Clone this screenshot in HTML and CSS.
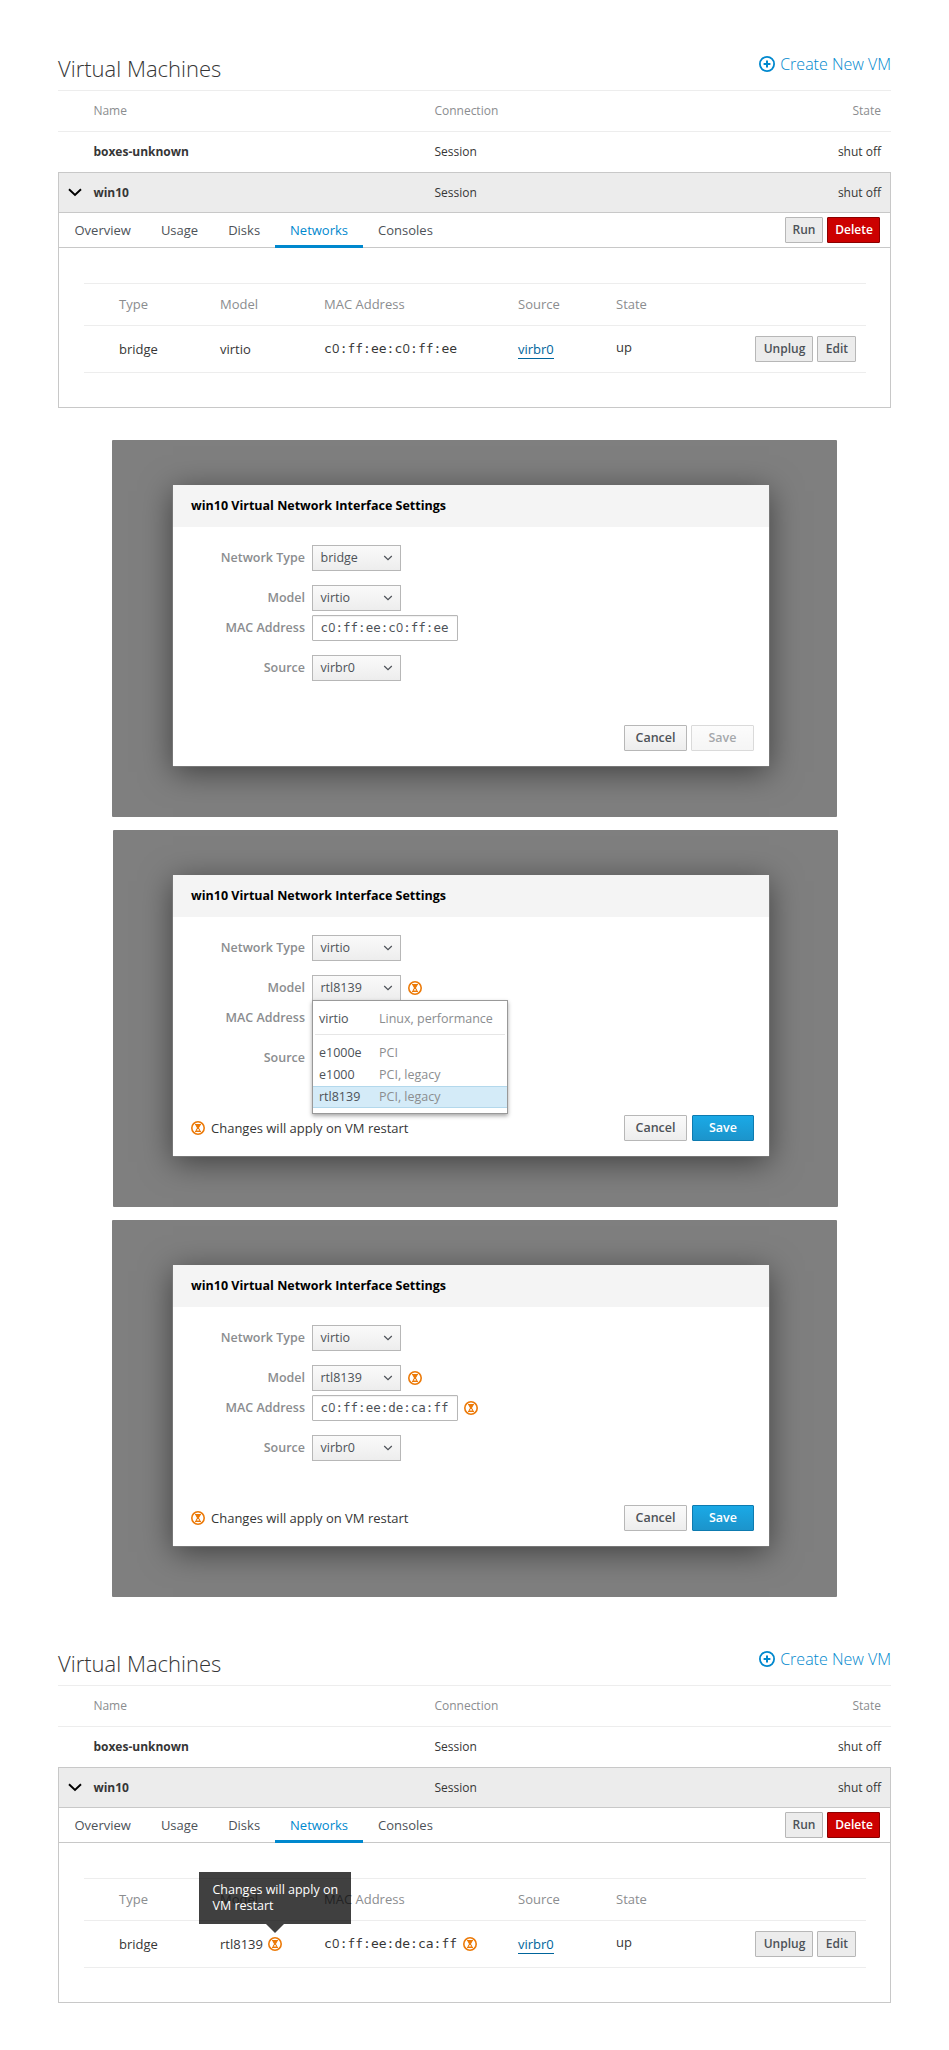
FILE: index.html
```html
<!DOCTYPE html>
<html lang="en">
<head>
<meta charset="utf-8">
<title>Virtual Machines</title>
<link rel="stylesheet" href="styles.css">
</head>
<body>
<svg class="defs" aria-hidden="true">
  <symbol id="pending" viewBox="0 0 14 14">
    <circle cx="7" cy="7" r="6.2" fill="#fff" stroke="#ec7a08" stroke-width="1.6"/>
    <path d="M4 3.1h6v1.2H9.2C9.2 5.6 8.4 6.3 7.8 7c.6.7 1.4 1.4 1.4 2.7H10v1.2H4V9.700h.8C4.800 8.400 5.600 7.700 6.200 7 5.600 6.300 4.800 5.600 4.800 4.300H4z" fill="#ec7a08"/>
    <path d="M5.700 9.500c.1-.8.600-1.100 1.300-1.500.7.400 1.200.7 1.300 1.500z" fill="#fff"/>
  </symbol>
  <symbol id="chev" viewBox="0 0 10 6"><path d="M1.200 1 5 4.700 8.800 1" fill="none" stroke="#4d5258" stroke-width="1.200"/></symbol>
</svg>
<main class="page">
  <section class="vms">
    <header class="vms-head">
      <h1>Virtual Machines</h1>
      <a class="create"><svg width="16" height="16" viewBox="0 0 16 16"><circle cx="8" cy="8" r="7.100" fill="none" stroke="#0088ce" stroke-width="1.800"/><path d="M8 4.600v6.800M4.600 8h6.800" stroke="#0088ce" stroke-width="2"/></svg>Create New VM</a>
    </header>
    <div class="vm-row labels"><span></span><span>Name</span><span>Connection</span><span class="end">State</span></div>
    <div class="vm-row"><span></span><b>boxes-unknown</b><span>Session</span><span class="end">shut off</span></div>
    <div class="panel">
      <div class="vm-row open"><svg class="toggle" width="14" height="9" viewBox="0 0 14 9"><path d="M1 1.200 7 7l6-5.800" fill="none" stroke="#000" stroke-width="1.900"/></svg><b>win10</b><span>Session</span><span class="end">shut off</span></div>
      <nav class="tabs"><a>Overview</a><a>Usage</a><a>Disks</a><a class="active">Networks</a><a>Consoles</a><span class="actions"><button class="btn run">Run</button><button class="btn danger">Delete</button></span></nav>
      <div class="nets">
        <div class="net labels"><span>Type</span><span>Model</span><span>MAC Address</span><span>Source</span><span>State</span></div>
        <div class="net"><span>bridge</span><span>virtio</span><span class="mac">c<i>0</i>:ff:ee:c<i>0</i>:ff:ee</span><span><a class="link">virbr0</a></span><span class="state">up</span><span class="acts"><button class="btn unplug">Unplug</button><button class="btn edit">Edit</button></span></div>
      </div>
    </div>
  </section>

  <section class="backdrop">
    <div class="dialog">
      <h2>win10 Virtual Network Interface Settings</h2>
      <div class="form">
        <div class="field"><label>Network Type</label><span class="select">bridge<svg width="10" height="6"><use href="#chev"/></svg></span></div>
        <div class="field tight"><label>Model</label><span class="select">virtio<svg width="10" height="6"><use href="#chev"/></svg></span></div>
        <div class="field"><label>MAC Address</label><span class="input"><span class="mac">c<i>0</i>:ff:ee:c<i>0</i>:ff:ee</span></span></div>
        <div class="field"><label>Source</label><span class="select">virbr0<svg width="10" height="6"><use href="#chev"/></svg></span></div>
      </div>
      <footer><button class="btn soft">Cancel</button><button class="btn soft disabled">Save</button></footer>
    </div>
  </section>

  <section class="backdrop shifted">
    <div class="dialog">
      <h2>win10 Virtual Network Interface Settings</h2>
      <div class="form">
        <div class="field"><label>Network Type</label><span class="select">virtio<svg width="10" height="6"><use href="#chev"/></svg></span></div>
        <div class="field tight"><label>Model</label><span class="select">rtl8139<svg width="10" height="6"><use href="#chev"/></svg>
          <span class="menu">
            <span class="opt first"><span>virtio</span><em>Linux, performance</em></span>
            <span class="opt"><span>e1000e</span><em>PCI</em></span>
            <span class="opt"><span>e1000</span><em>PCI, legacy</em></span>
            <span class="opt picked"><span>rtl8139</span><em>PCI, legacy</em></span>
          </span></span><svg class="pend" width="14" height="14"><use href="#pending"/></svg></div>
        <div class="field"><label>MAC Address</label></div>
        <div class="field"><label>Source</label></div>
      </div>
      <footer><span class="note"><svg width="14" height="14"><use href="#pending"/></svg>Changes will apply on VM restart</span><button class="btn soft">Cancel</button><button class="btn primary">Save</button></footer>
    </div>
  </section>

  <section class="backdrop">
    <div class="dialog">
      <h2>win10 Virtual Network Interface Settings</h2>
      <div class="form">
        <div class="field"><label>Network Type</label><span class="select">virtio<svg width="10" height="6"><use href="#chev"/></svg></span></div>
        <div class="field tight"><label>Model</label><span class="select">rtl8139<svg width="10" height="6"><use href="#chev"/></svg></span><svg class="pend" width="14" height="14"><use href="#pending"/></svg></div>
        <div class="field"><label>MAC Address</label><span class="input"><span class="mac">c<i>0</i>:ff:ee:de:ca:ff</span></span><svg class="pend near" width="14" height="14"><use href="#pending"/></svg></div>
        <div class="field"><label>Source</label><span class="select">virbr0<svg width="10" height="6"><use href="#chev"/></svg></span></div>
      </div>
      <footer><span class="note"><svg width="14" height="14"><use href="#pending"/></svg>Changes will apply on VM restart</span><button class="btn soft">Cancel</button><button class="btn primary">Save</button></footer>
    </div>
  </section>

  <section class="vms last">
    <header class="vms-head">
      <h1>Virtual Machines</h1>
      <a class="create"><svg width="16" height="16" viewBox="0 0 16 16"><circle cx="8" cy="8" r="7.100" fill="none" stroke="#0088ce" stroke-width="1.800"/><path d="M8 4.600v6.800M4.600 8h6.800" stroke="#0088ce" stroke-width="2"/></svg>Create New VM</a>
    </header>
    <div class="vm-row labels"><span></span><span>Name</span><span>Connection</span><span class="end">State</span></div>
    <div class="vm-row"><span></span><b>boxes-unknown</b><span>Session</span><span class="end">shut off</span></div>
    <div class="panel">
      <div class="vm-row open"><svg class="toggle" width="14" height="9" viewBox="0 0 14 9"><path d="M1 1.200 7 7l6-5.800" fill="none" stroke="#000" stroke-width="1.900"/></svg><b>win10</b><span>Session</span><span class="end">shut off</span></div>
      <nav class="tabs"><a>Overview</a><a>Usage</a><a>Disks</a><a class="active">Networks</a><a>Consoles</a><span class="actions"><button class="btn run">Run</button><button class="btn danger">Delete</button></span></nav>
      <div class="nets">
        <div class="net labels"><span>Type</span><span>Model</span><span>MAC Address</span><span>Source</span><span>State</span></div>
        <div class="net"><span>bridge</span><span class="flagged">rtl8139<span class="tip-anchor"><svg width="14" height="14"><use href="#pending"/></svg><span class="tip">Changes will apply on<br>VM restart</span></span></span><span class="flagged"><span class="mac">c<i>0</i>:ff:ee:de:ca:ff</span><svg width="14" height="14"><use href="#pending"/></svg></span><span><a class="link">virbr0</a></span><span class="state">up</span><span class="acts"><button class="btn unplug">Unplug</button><button class="btn edit">Edit</button></span></div>
      </div>
    </div>
  </section>
</main>
</body>
</html>
```
FILE: styles.css
```css
* { box-sizing: border-box; }
body { margin: 0; background: #fff; color: #363636; font: 13px/18px "Open Sans", "Noto Sans", sans-serif; }
.defs { position: absolute; width: 0; height: 0; }
svg { display: block; flex: none; }
.page { height: 2050px; padding-top: 40px; white-space: nowrap; }

/* machine list */
.vms { width: 833px; margin-left: 58px; margin-bottom: 32px; }
.vms.last { margin-top: 38px; margin-bottom: 0; }
.vms-head { height: 50px; display: flex; justify-content: space-between; align-items: flex-start; }
h1 { margin: 11px 0 0; font-size: 22px; line-height: 34px; font-weight: 300; }
.create { display: flex; align-items: center; gap: 5px; margin-top: 12px; font-size: 16px; line-height: 24px; font-weight: 300; color: #0088ce; }
.vm-row { height: 41px; border-top: 1px solid #ededed; padding-right: 10px; display: grid; grid-template-columns: 35.4px 341px 1fr auto; align-items: center; font-size: 12px; }
.labels { color: #8b8d8f; }
.panel { border: 1px solid #c8c8c8; height: 236px; }
.vm-row.open { height: 40px; background: #ececec; border-top: 0; border-bottom: 1px solid #c8c8c8; padding-right: 9px; grid-template-columns: 34.4px 341px 1fr auto; }
.toggle { margin-left: 9px; }
.tabs { height: 35px; display: flex; border-bottom: 1px solid #c8c8c8; padding: 0 10px 0 .5px; color: #4d5258; }
.tabs a { height: 35px; line-height: 35px; padding: 0 15px; }
.tabs a.active { color: #0088ce; border-bottom: 3px solid #0088ce; }
.actions { margin-left: auto; display: flex; gap: 4px; padding-top: 4px; }

.btn { height: 26px; padding: 0; border: 1px solid #b7b7b7; border-radius: 1px; background: #ececec; color: #4d5258; font: 600 12px/22px "Open Sans", "Noto Sans", sans-serif; }
.run { width: 38px; }
.danger { width: 53px; padding-left: 1px; background: #c00; border-color: #8b0000; color: #fff; }
.unplug { width: 58px; padding-left: 1px; }
.edit { width: 39px; padding-left: 1px; }
.soft, .primary { width: 63px; font-size: 12.5px; background: linear-gradient(#fafafa, #ededed); }
.disabled { opacity: .5; }
.primary { width: 62px; margin-left: 1px; background: linear-gradient(#1aa9e6, #1c94cb); border-color: #0d7bb0; color: #fff; }

.nets { margin: 35px 24px 0 25px; border-bottom: 1px solid #ededed; }
.net { height: 47px; border-top: 1px solid #ededed; padding: 0 10px 0 35px; display: grid; grid-template-columns: 101px 104px 194px 98px 1fr auto; align-items: center; }
.net.labels { height: 42px; grid-template-columns: 101px 104px 194px 98px 1fr; padding-bottom: 1px; }
.state { position: relative; top: -2px; }
.acts { display: flex; gap: 4px; }
.link { color: #00659c; border-bottom: 1px solid #00659c; }
.mac { font-family: "DejaVu Sans Mono", monospace; }
.mac i { display: inline-block; width: .602em; text-align: center; font-family: "Open Sans", sans-serif; font-style: normal; line-height: 1; }
.flagged { display: flex; align-items: center; gap: 6px; }
.tip-anchor { position: relative; left: -.5px; }
.tip { position: absolute; left: -69px; top: -65px; width: 152px; height: 52px; padding: 10px 13px; background: rgba(0, 0, 0, .75); color: #fff; line-height: 16px; font-size: 12.5px; }
.tip::after { content: ""; position: absolute; left: 67px; top: 52px; border: 9px solid transparent; border-top-color: rgba(0, 0, 0, .75); border-bottom: 0; }

/* settings dialogs */
.backdrop { width: 725px; height: 377px; margin: 0 0 13px 112px; padding: 45px 0 0 61px; background: #7f7f7f; border-radius: 1px; overflow: hidden; }
.shifted { margin-left: 113px; padding-left: 60px; }
.dialog { width: 596px; height: 281px; background: #fff; display: flex; flex-direction: column; box-shadow: 1px 0 0 #777, -1px 0 0 #777, 0 1px 0 #777, 0 6px 30px rgba(0, 0, 0, .5); font-size: 12.5px; }
h2 { margin: 0; height: 42px; padding-left: 18px; background: #f4f4f4; color: #000; font-size: 12.5px; line-height: 41px; font-weight: 700; }
.form { padding-top: 18px; }
.field { height: 26px; margin-bottom: 14px; display: flex; align-items: center; }
.tight { margin-bottom: 4px; }
label { width: 132px; margin-right: 7px; text-align: right; font-weight: 600; color: #8b8d8f; }
.select, .input { height: 26px; border: 1px solid #b7b7b7; padding: 0 7px 0 7.5px; color: #4d5258; display: flex; align-items: center; }
.select { position: relative; width: 89px; justify-content: space-between; background: linear-gradient(#fafafa, #ededed); }
.input { width: 146px; border-radius: 1px; box-shadow: inset 0 1px 1px rgba(0, 0, 0, .06); }
.pend { margin-left: 7px; }
.near { margin-left: 6px; }
.menu { position: absolute; z-index: 2; left: -1px; top: 24px; width: 196px; height: 114px; border: 1px solid #999; background: #fff; box-shadow: 0 2px 4px rgba(0, 0, 0, .35); }
.opt { height: 22px; padding-left: 6px; display: grid; grid-template-columns: 60px 1fr; align-items: center; }
.opt em { font-style: normal; color: #8b8d8f; }
.opt.first { height: 34px; padding: 2px 0 0 4px; margin: 0 2px 7px; border-bottom: 1px solid #e6e6e6; }
.picked { background: #d4ebf8; border: 1px solid #b3d8ec; border-width: 1px 0; }
footer { margin-top: auto; height: 41px; padding: 0 15px 0 18px; display: flex; justify-content: flex-end; align-items: flex-start; gap: 4px; }
.note { margin-right: auto; height: 26px; display: flex; align-items: center; gap: 6px; font-size: 13px; }
```
